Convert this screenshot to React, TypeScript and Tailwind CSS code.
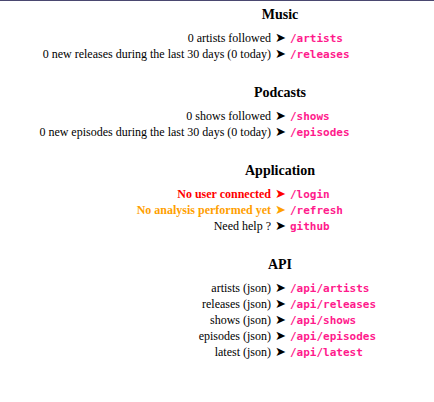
const SECTIONS: {
  title: string;
  rows: { label: string; link: string; tone?: "red" | "orange" }[];
}[] = [
  {
    title: "Music",
    rows: [
      { label: "0 artists followed", link: "/artists" },
      { label: "0 new releases during the last 30 days (0 today)", link: "/releases" },
    ],
  },
  {
    title: "Podcasts",
    rows: [
      { label: "0 shows followed", link: "/shows" },
      { label: "0 new episodes during the last 30 days (0 today)", link: "/episodes" },
    ],
  },
  {
    title: "Application",
    rows: [
      { label: "No user connected", link: "/login", tone: "red" },
      { label: "No analysis performed yet", link: "/refresh", tone: "orange" },
      { label: "Need help ?", link: "github" },
    ],
  },
  {
    title: "API",
    rows: [
      { label: "artists (json)", link: "/api/artists" },
      { label: "releases (json)", link: "/api/releases" },
      { label: "shows (json)", link: "/api/shows" },
      { label: "episodes (json)", link: "/api/episodes" },
      { label: "latest (json)", link: "/api/latest" },
    ],
  },
];

function toneClass(tone?: "red" | "orange") {
  if (tone === "red") return "text-[#ff0000]";
  if (tone === "orange") return "text-[#ffa000]";
  return "text-black";
}

export default function App() {
  return (
    <main className="min-h-[402px] w-[434px] bg-white border-t border-[#4a4870] pt-[6px] font-['Liberation_Serif',serif]">
      <div className="flex flex-col gap-[23px]">
        {SECTIONS.map((s) => (
          <section key={s.title}>
            <h3 className="pl-[126px] text-center text-[14px] leading-[16px] font-bold text-black">{s.title}</h3>
            <div className="mt-[7px] flex flex-col">
              {s.rows.map((r) => (
                <div key={r.link} className="flex h-[16px] items-baseline text-[12px] leading-[16px] overflow-visible">
                  <span
                    className={`w-[271px] shrink-0 text-right whitespace-nowrap ${toneClass(r.tone)} ${
                      r.tone ? "font-bold" : ""
                    }`}
                  >
                    {r.label}
                  </span>
                  <span
                    className={`ml-[4px] w-[12px] shrink-0 text-[13px] font-['DejaVu_Sans',sans-serif] ${toneClass(r.tone)}`}
                  >
                    ➤
                  </span>
                  <a className="ml-[3px] text-[11px] font-bold text-[#ff1a8c] font-['DejaVu_Sans_Mono',monospace] whitespace-nowrap">
                    {r.link}
                  </a>
                </div>
              ))}
            </div>
          </section>
        ))}
      </div>
    </main>
  );
}
